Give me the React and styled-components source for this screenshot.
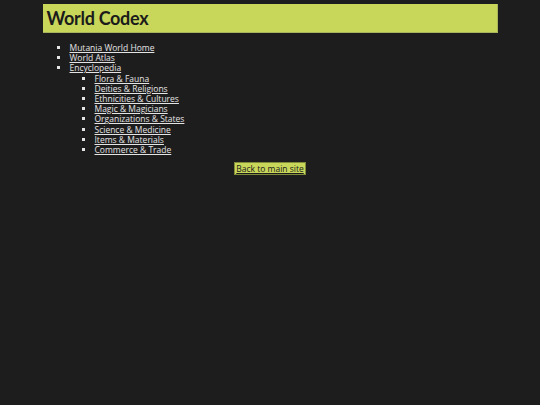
import React from "react";
import styled, { createGlobalStyle } from "styled-components";

const GlobalStyle = createGlobalStyle`
  html, body {
    margin: 0;
    padding: 0;
    background: #1e1d1e;
  }
  body {
    font-family: "Open Sans", "Liberation Sans", sans-serif;
    color: #e4e4e4;
  }
`;

const Page = styled.div`
  width: 455px;
  margin: 0 auto;
  padding-top: 4px;
`;

const Header = styled.header`
  background: #c8d75a;
  border-right: 1px solid #a9b35c;
  border-bottom: 1px solid #a9b35c;
  height: 28px;
  display: flex;
  align-items: center;
  padding: 0 4px;
`;

const Title = styled.h1`
  margin: 0;
  font-family: "Lato", sans-serif;
  font-weight: 700;
  font-size: 18px;
  letter-spacing: -0.3px;
  color: #1b1b1b;
`;

const List = styled.ul`
  margin: 10px 0 0;
  padding-left: ${(p) => p.$indent}px;
  list-style: square;
  font-size: 8.5px;
  line-height: 10.2px;
`;

const SubList = styled(List)`
  margin: 0;
`;

const Item = styled.li`
  &::marker {
    color: #e4e4e4;
    font-size: 8px;
  }
`;

const Link = styled.a`
  color: #e4e4e4;
  text-decoration: underline;
`;

const Footer = styled.div`
  display: flex;
  justify-content: center;
  margin-top: 7px;
`;

const BackButton = styled.a`
  background: #c8d75a;
  border: 1px solid #7f8a3a;
  color: #1b1b1b;
  font-size: 8.5px;
  line-height: 11px;
  padding: 0 1px;
  text-decoration: underline;
`;

const sections = [
  "Flora & Fauna",
  "Deities & Religions",
  "Ethnicities & Cultures",
  "Magic & Magicians",
  "Organizations & States",
  "Science & Medicine",
  "Items & Materials",
  "Commerce & Trade",
];

export default function App() {
  return (
    <>
      <GlobalStyle />
      <Page>
        <Header>
          <Title>World Codex</Title>
        </Header>
        <List $indent={27}>
          <Item>
            <Link href="#">Mutania World Home</Link>
          </Item>
          <Item>
            <Link href="#">World Atlas</Link>
          </Item>
          <Item>
            <Link href="#">Encyclopedia</Link>
            <SubList $indent={25}>
              {sections.map((s) => (
                <Item key={s}>
                  <Link href="#">{s}</Link>
                </Item>
              ))}
            </SubList>
          </Item>
        </List>
        <Footer>
          <BackButton href="#">Back to main site</BackButton>
        </Footer>
      </Page>
    </>
  );
}
